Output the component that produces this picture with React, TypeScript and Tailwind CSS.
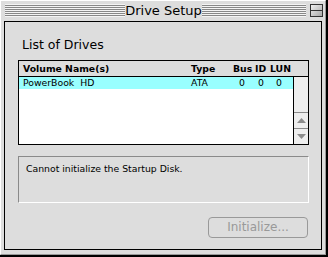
import React from "react";

const stripe =
  "h-[13px] bg-[image:repeating-linear-gradient(to_bottom,#f4f4f4_0px,#f4f4f4_1px,#888888_1px,#888888_2px)]";

function UpArrow() {
  return (
    <svg width="9" height="5" viewBox="0 0 9 5">
      <polygon points="4.5,0 9,5 0,5" fill="#8c8c8c" />
    </svg>
  );
}
function DownArrow() {
  return (
    <svg width="9" height="5" viewBox="0 0 9 5">
      <polygon points="0,0 9,0 4.5,5" fill="#8c8c8c" />
    </svg>
  );
}

export default function App() {
  return (
    <div
      className="w-[328px] h-[257px] bg-[#dddddd] border-r-2 border-b-2 border-black"
      style={{ fontFamily: '"DejaVu Sans", sans-serif' }}
    >
      <div className="w-full h-full flex flex-col border-t border-l border-t-white border-l-white border-r border-b border-r-[#999999] border-b-[#999999]">
        {/* Title bar */}
        <div className="h-[20px] flex items-start pl-[4px] pr-[2px]">
          <div className={`w-[120px] mt-[3px] ${stripe}`} />
          <div className="w-[77px] h-[20px] flex items-center justify-center text-[13px] leading-[15px] text-black -mt-[1px]">
            Drive Setup
          </div>
          <div className={`flex-1 mt-[3px] ${stripe}`} />
          <div className="ml-[4px] mt-[3px] w-[13px] h-[13px] border border-[#333333] bg-[image:linear-gradient(to_bottom_right,#f0f0f0,#a8a8a8)] flex flex-col">
            <div className="flex-1" />
            <div className="h-px bg-[#333333]" />
            <div className="flex-1" />
          </div>
        </div>

        {/* Content */}
        <div className="ml-[3px] mr-[3px] mb-[4px] flex-1 border border-black bg-[#dddddd] flex flex-col">
          <div className="mt-[15px] ml-[17px] text-[12.5px] leading-[15px] text-black">
            List of Drives
          </div>

          {/* List box */}
          <div className="mt-[8px] ml-[13px] w-[291px] h-[85px] border border-black flex flex-col bg-white">
            <div className="h-[16px] border-b border-black bg-[#dddddd] flex items-start pl-[4px] text-[9.3px] leading-[15px] font-bold text-black whitespace-nowrap">
              <div className="w-[168px]">Volume Name(s)</div>
              <div className="w-[42px]">Type</div>
              <div className="w-[22px]">Bus</div>
              <div className="w-[15px]">ID</div>
              <div>LUN</div>
            </div>
            <div className="flex-1 flex">
              <div className="flex-1 bg-white">
                <div className="h-[12px] bg-[#99ffff] flex pl-[4px] text-[9.3px] leading-[12px] text-black whitespace-pre">
                  <div className="w-[168px]">PowerBook  HD</div>
                  <div className="w-[48px]">ATA</div>
                  <div className="w-[19px]">0</div>
                  <div className="w-[18px]">0</div>
                  <div>0</div>
                </div>
              </div>
              <div className="w-[15px] border-l border-black bg-[#eeeeee] flex flex-col justify-end">
                <div className="h-[16px] border-t border-[#8a8a8a] flex items-center justify-center">
                  <UpArrow />
                </div>
                <div className="h-[16px] border-t border-[#8a8a8a] flex items-center justify-center">
                  <DownArrow />
                </div>
              </div>
            </div>
          </div>

          {/* Message box */}
          <div className="mt-[11px] ml-[13px] w-[291px] h-[47px] border-t border-l border-t-[#8a8a8a] border-l-[#8a8a8a] border-b border-r border-b-white border-r-white pt-[6px] pl-[7px] text-[9.3px] leading-[12px] text-black">
            Cannot initialize the Startup Disk.
          </div>

          {/* Button */}
          <div className="mt-[14px] flex justify-end pr-[13px]">
            <div className="w-[100px] h-[21px] rounded-[4px] border border-[#999999] flex items-center justify-center text-[12px] leading-[14px] text-[#999999] pb-[2px]">
              Initialize...
            </div>
          </div>
        </div>
      </div>
    </div>
  );
}
